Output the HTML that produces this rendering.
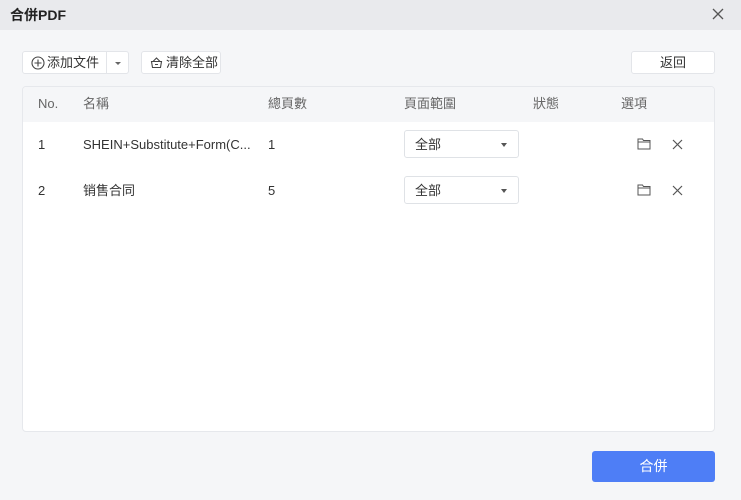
<!DOCTYPE html>
<html><head><meta charset="utf-8"><style>
*{box-sizing:border-box;margin:0;padding:0}
body{width:741px;height:500px;background:#f5f6f8;font-family:"Liberation Sans","Noto Sans CJK SC",sans-serif;color:#333;position:relative;overflow:hidden;font-size:13px;line-height:18px}
.title{position:absolute;left:0;top:0;width:741px;height:30px;background:#e9eaed;}
.title span{position:absolute;left:10px;top:5px;font-size:14px;font-weight:bold;color:#222;line-height:20px}
.close{position:absolute;left:711px;top:7px}
.btn{position:absolute;background:#fff;border:1px solid #e3e5e9;border-radius:3px;font-size:13px;color:#333}
.tbl{position:absolute;left:22px;top:86px;width:693px;height:346px;background:#fff;border:1px solid #e6e8ec;border-radius:4px;overflow:hidden}
.hd{height:35px;background:#f5f6f8;position:relative;color:#666}
.t{position:absolute;white-space:nowrap}
.sel{position:absolute;width:115px;height:28px;border:1px solid #dfe2e6;border-radius:3px;background:#fff}
.sel span{position:absolute;left:10px;top:5px}
.sel i{position:absolute;right:11px;top:12px;border:3.5px solid transparent;border-top:4px solid #555}
.merge{position:absolute;left:592px;top:451px;width:123px;height:31px;background:#4e7ef6;border-radius:3px;color:#fff;font-size:14px;text-align:center;line-height:31px}
</style></head><body>
<div class="title"><span>合併PDF</span>
<svg class="close" width="14" height="14" viewBox="0 0 14 14"><path d="M2 2L12 12M12 2L2 12" stroke="#555" stroke-width="1.3"/></svg></div>
<div class="btn" style="left:22px;top:51px;width:107px;height:23px">
<svg style="position:absolute;left:8px;top:4px" width="14" height="14" viewBox="0 0 14 14"><circle cx="7" cy="7" r="6" fill="none" stroke="#444" stroke-width="1.1"/><path d="M7 3.5V10.5M3.5 7H10.5" stroke="#444" stroke-width="1.1"/></svg>
<span style="position:absolute;left:24px;top:2px">添加文件</span>
<div style="position:absolute;left:83px;top:0;width:1px;height:21px;background:#e3e5e9"></div>
<i style="position:absolute;left:92px;top:10px;border:3px solid transparent;border-top:3.5px solid #666"></i></div>
<div class="btn" style="left:141px;top:51px;width:80px;height:23px">
<svg style="position:absolute;left:8px;top:4px" width="13" height="13" viewBox="0 0 13 13"><path d="M1.5 5.5H11.5L10.5 11.5H2.5ZM3 5.5L6.5 2L10 5.5M5 8.5H8" fill="none" stroke="#444" stroke-width="1.1"/></svg>
<span style="position:absolute;left:24px;top:2px">清除全部</span></div>
<div class="btn" style="left:631px;top:51px;width:84px;height:23px;text-align:center;line-height:21px">返回</div>
<div class="tbl">
<div class="hd"><span class="t" style="left:15px;top:8px">No.</span><span class="t" style="left:60px;top:8px">名稱</span><span class="t" style="left:245px;top:8px">總頁數</span><span class="t" style="left:381px;top:8px">頁面範圍</span><span class="t" style="left:510px;top:8px">狀態</span><span class="t" style="left:598px;top:8px">選項</span></div>
<span class="t" style="left:15px;top:49px">1</span><span class="t" style="left:60px;top:49px">SHEIN+Substitute+Form(C...</span><span class="t" style="left:245px;top:49px">1</span>
<div class="sel" style="left:381px;top:43px"><span>全部</span><i></i></div>
<span class="t" style="left:15px;top:95px">2</span><span class="t" style="left:60px;top:95px">销售合同</span><span class="t" style="left:245px;top:95px">5</span>
<div class="sel" style="left:381px;top:89px"><span>全部</span><i></i></div>
<svg style="position:absolute;left:614px;top:51px" width="14" height="12" viewBox="0 0 14 12"><path d="M1 1H5.5L6.5 2.5H13V11H1ZM1 4H13" fill="none" stroke="#555" stroke-width="1"/></svg>
<svg style="position:absolute;left:649px;top:52px" width="11" height="11" viewBox="0 0 11 11"><path d="M1 1L10 10M10 1L1 10" stroke="#555" stroke-width="1.2"/></svg>
<svg style="position:absolute;left:614px;top:97px" width="14" height="12" viewBox="0 0 14 12"><path d="M1 1H5.5L6.5 2.5H13V11H1ZM1 4H13" fill="none" stroke="#555" stroke-width="1"/></svg>
<svg style="position:absolute;left:649px;top:98px" width="11" height="11" viewBox="0 0 11 11"><path d="M1 1L10 10M10 1L1 10" stroke="#555" stroke-width="1.2"/></svg>
</div>
<div class="merge">合併</div>
</body></html>
